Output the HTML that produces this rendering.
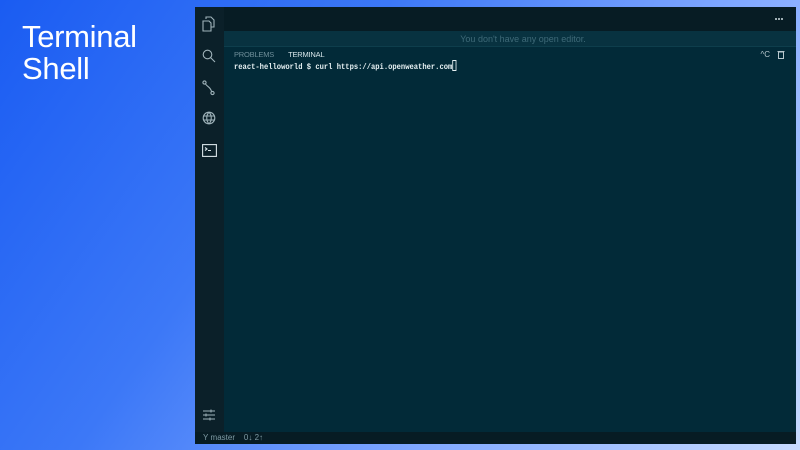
<!DOCTYPE html>
<html><head><style>
*{margin:0;padding:0;box-sizing:border-box}
body{width:800px;height:450px;overflow:hidden;position:relative;font-family:"Liberation Sans",sans-serif;
background:linear-gradient(125deg,#1a5cf2 0%,#3c78f7 35%,#7ea6ff 65%,#c8dbff 100%);}
.title{position:absolute;left:22px;top:21px;color:#fff;font-size:31px;line-height:32px;letter-spacing:-0.3px}
.win{position:absolute;left:195px;top:7px;width:601px;height:437px;background:#022a38;overflow:hidden}
.act{position:absolute;left:0;top:0;width:29px;height:425px;background:#0b2029}
.top{position:absolute;left:29px;top:0;right:0;height:24px;background:#071c24}
.noed{position:absolute;left:29px;top:24px;right:0;height:16px;background:#083240;border-bottom:1px solid #0e3e4c;color:#3f6a78;font-size:9px;text-align:center;line-height:16px;padding-left:26px}
.tabs{position:absolute;left:39px;top:43px;font-size:7.5px;color:#6e8e99;letter-spacing:-0.2px}
.tabs span.on{color:#d8e6ea;margin-left:14px}
.term{position:absolute;left:39px;top:53px;font-family:"Liberation Mono",monospace;font-size:8.6px;font-weight:bold;color:#e6f0f2;transform:scaleX(0.83);transform-origin:0 0;white-space:nowrap}
.cur{display:inline-block;width:5px;height:11px;border:1px solid #e6f0f2;vertical-align:-2px}
.status{position:absolute;left:0;bottom:0;width:100%;height:12px;background:#071c24;color:#7f9ba4;font-size:8px;line-height:12px;padding-left:8px}
svg{position:absolute}
.dot{position:absolute;top:11px;width:2px;height:2px;background:#d0dde2;border-radius:1px}
</style></head><body>
<div class="title">Terminal<br>Shell</div>
<div class="win">
<div class="act"></div>
<div class="top"></div>
<div class="dot" style="left:580px"></div><div class="dot" style="left:583px"></div><div class="dot" style="left:586px"></div>
<div class="noed">You don't have any open editor.</div>
<div class="tabs"><span>PROBLEMS</span><span class="on">TERMINAL</span></div>
<div class="term">react-helloworld $ curl https://api.openweather.com<span class="cur"></span></div>
<div style="position:absolute;right:26px;top:43px;color:#b8c8ce;font-size:8px">^C</div>
<svg style="left:582px;top:43px" width="8" height="9" viewBox="0 0 8 9"><rect x="1.5" y="2" width="5" height="6.5" fill="none" stroke="#b8c8ce"/><line x1="0.5" y1="1.5" x2="7.5" y2="1.5" stroke="#b8c8ce"/></svg>
<svg style="left:7px;top:9px" width="14" height="16" viewBox="0 0 14 16" fill="none" stroke="#9fb3ba" stroke-width="1.1"><path d="M4 3V1h5l3 3v7H9"/><path d="M1 5h6l2 2v8H1z"/></svg>
<svg style="left:7px;top:42px" width="14" height="14" viewBox="0 0 14 14" fill="none" stroke="#9fb3ba" stroke-width="1.1"><circle cx="5.5" cy="5.5" r="4.3"/><path d="M8.6 8.6L13 13"/></svg>
<svg style="left:7px;top:73px" width="14" height="16" viewBox="0 0 14 16" fill="none" stroke="#9fb3ba" stroke-width="1.1"><circle cx="2.5" cy="2.5" r="1.6"/><circle cx="10.5" cy="13" r="1.6"/><path d="M3.5 4c2 3 5 3 6 7.5"/></svg>
<svg style="left:7px;top:104px" width="14" height="14" viewBox="0 0 14 14" fill="none" stroke="#9fb3ba" stroke-width="1.1"><circle cx="7" cy="7" r="5.8"/><path d="M1.5 5h11M1.5 9h11M7 1.2c-3 3-3 8.6 0 11.6M7 1.2c3 3 3 8.6 0 11.6"/></svg>
<svg style="left:7px;top:137px" width="15" height="13" viewBox="0 0 15 13" fill="none" stroke="#d8e4e8" stroke-width="1.1"><rect x="0.6" y="0.6" width="13.8" height="11.8"/><path d="M3 3.5l2 1.5-2 1.5M6 6.5h3"/></svg>
<svg style="left:8px;top:402px" width="12" height="12" viewBox="0 0 12 12" fill="none" stroke="#9fb3ba" stroke-width="1"><path d="M0 2h12M0 6h12M0 10h12"/><path d="M8 0.5v3M3 4.5v3M7 8.5v3"/></svg>
<div class="status">Y&nbsp;master &nbsp;&nbsp;&nbsp;0↓ 2↑</div>
</div>
</body></html>
